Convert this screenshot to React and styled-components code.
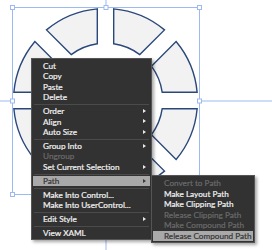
import React from "react";
import styled, { createGlobalStyle } from "styled-components";

const Global = createGlobalStyle`
  html, body { margin: 0; padding: 0; background: #ffffff; }
  body { width: 272px; height: 250px; overflow: hidden; font-family: "Lato", "Open Sans", sans-serif; }
`;

const Stage = styled.div`
  position: relative;
  width: 272px;
  height: 250px;
  overflow: hidden;
  background: #ffffff;
`;

const Canvas = styled.svg`
  display: block;
`;

const Menu = styled.div`
  position: absolute;
  left: ${(p) => p.$left}px;
  top: ${(p) => p.$top}px;
  width: ${(p) => p.$width}px;
  box-sizing: border-box;
  display: flex;
  flex-direction: column;
  padding: ${(p) => p.$padTop}px 0 ${(p) => p.$padBottom}px;
  background: #323232;
  border: 1px solid #555555;
  box-shadow: 2px 2px 3px rgba(0, 0, 0, 0.35);
`;

const Item = styled.div`
  position: relative;
  height: 10.55px;
  line-height: 10.55px;
  margin: 0 1px;
  padding-left: ${(p) => p.$indent}px;
  font-family: "Lato", "Open Sans", sans-serif;
  font-size: 8.2px;
  font-weight: 400;
  white-space: nowrap;
  -webkit-text-stroke: 0.2px currentColor;
  color: ${(p) => (p.$active ? "#353535" : p.$disabled ? "#6b6b6b" : "#f2f2f2")};
  background: ${(p) => (p.$active ? "#a9a9a9" : "transparent")};
`;

const Arrow = styled.span`
  position: absolute;
  right: 4px;
  top: 50%;
  margin-top: -2.5px;
  width: 0;
  height: 0;
  border-top: 2.5px solid transparent;
  border-bottom: 2.5px solid transparent;
  border-left: 3px solid ${(p) => (p.$active ? "#3a3a3a" : "#e8e8e8")};
`;

const Separator = styled.div`
  height: 1px;
  margin: 1.15px 2px;
  background: #4b4b4b;
`;

const main = [
  { t: "Cut" },
  { t: "Copy" },
  { t: "Paste" },
  { t: "Delete" },
  "sep",
  { t: "Order", sub: true },
  { t: "Align", sub: true },
  { t: "Auto Size", sub: true },
  "sep",
  { t: "Group Into", sub: true },
  { t: "Ungroup", disabled: true },
  { t: "Set Current Selection", sub: true },
  "sep",
  { t: "Path", sub: true, active: true },
  "sep",
  { t: "Make Into Control..." },
  { t: "Make Into UserControl..." },
  "sep",
  { t: "Edit Style", sub: true },
  "sep",
  { t: "View XAML" },
];

const pathSub = [
  { t: "Convert to Path", disabled: true },
  { t: "Make Layout Path" },
  { t: "Make Clipping Path" },
  { t: "Release Clipping Path", disabled: true },
  { t: "Make Compound Path", disabled: true },
  { t: "Release Compound Path", active: true },
];

const CX = 105.5;
const CY = 100.5;
const R = 92;
const r = 57.3;
const H = 8.2;

function pt(rho, a, side) {
  const t = Math.sqrt(rho * rho - H * H);
  const u = [Math.cos(a), Math.sin(a)];
  const n = [Math.cos(a + Math.PI / 2), Math.sin(a + Math.PI / 2)];
  return [CX + t * u[0] + side * H * n[0], CY + t * u[1] + side * H * n[1]];
}

function segmentPath(i) {
  const a1 = (i * Math.PI) / 4;
  const a2 = ((i + 1) * Math.PI) / 4;
  const o1 = pt(R, a1, 1);
  const o2 = pt(R, a2, -1);
  const i2 = pt(r, a2, -1);
  const i1 = pt(r, a1, 1);
  const f = (p) => `${p[0].toFixed(2)} ${p[1].toFixed(2)}`;
  return `M ${f(o1)} A ${R} ${R} 0 0 1 ${f(o2)} L ${f(i2)} A ${r} ${r} 0 0 0 ${f(i1)} Z`;
}

const handles = [
  [12.5, 7.5],
  [106, 7.5],
  [199.5, 7.5],
  [12.5, 101],
  [199.5, 101],
  [12.5, 194.5],
  [106, 194.5],
  [199.5, 194.5],
];

function Drawing() {
  const blue = "#9db9f2";
  return (
    <Canvas width="272" height="250" viewBox="0 0 272 250">
      <line x1="106" y1="0" x2="106" y2="7.5" stroke={blue} strokeWidth="1" />
      <line x1="106" y1="194.5" x2="106" y2="250" stroke={blue} strokeWidth="1" />
      <line x1="0" y1="101" x2="12.5" y2="101" stroke={blue} strokeWidth="1" />
      <line x1="199.5" y1="101" x2="272" y2="101" stroke={blue} strokeWidth="1" />
      <rect x="12.5" y="7.5" width="187" height="187" fill="none" stroke={blue} strokeWidth="1" />
      {Array.from({ length: 8 }, (_, i) => (
        <path key={i} d={segmentPath(i)} fill="#f2f2f2" stroke="#2a477a" strokeWidth="1.4" strokeLinejoin="miter" />
      ))}
      {handles.map(([x, y], i) => (
        <rect key={i} x={x - 2} y={y - 2} width="4" height="4" fill="#ffffff" stroke={blue} strokeWidth="1" />
      ))}
    </Canvas>
  );
}

function MenuList({ items }) {
  return items.map((it, i) =>
    it === "sep" ? (
      <Separator key={i} />
    ) : (
      <Item key={i} $indent={10} $active={it.active} $disabled={it.disabled}>
        {it.t}
        {it.sub && <Arrow $active={it.active} />}
      </Item>
    )
  );
}

export default function App() {
  return (
    <>
      <Global />
      <Stage>
        <Drawing />
        <Menu $left={31} $top={58} $width={121} $padTop={1.5} $padBottom={1}>
          <MenuList items={main} />
        </Menu>
        <Menu $left={151} $top={175} $width={104} $padTop={2} $padBottom={1}>
          {pathSub.map((it, i) => (
            <Item key={i} $indent={11} $active={it.active} $disabled={it.disabled}>
              {it.t}
            </Item>
          ))}
        </Menu>
      </Stage>
    </>
  );
}
